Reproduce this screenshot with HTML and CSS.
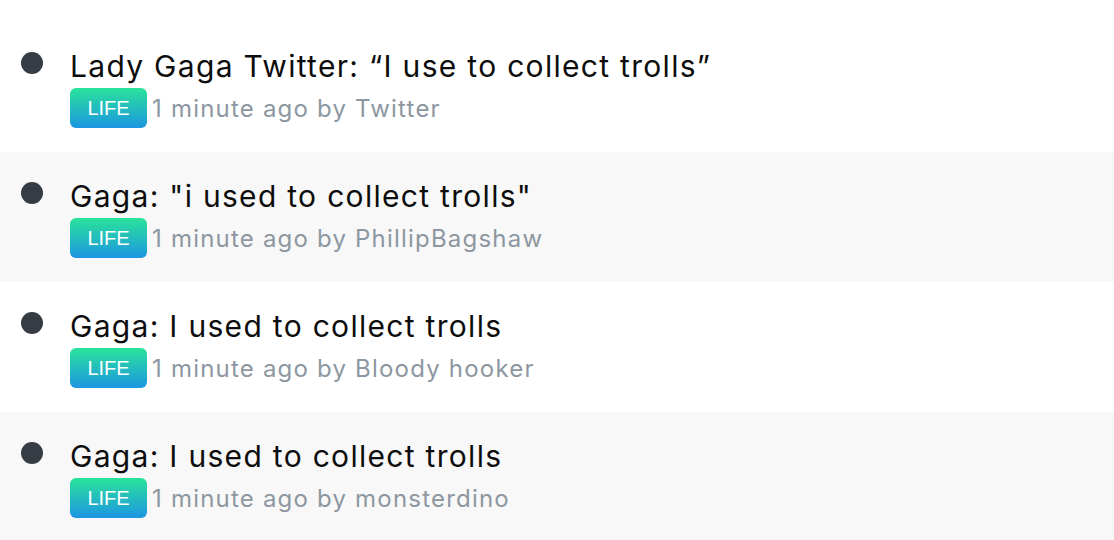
FILE: index.html
```html
<!DOCTYPE html>
<html lang="en">
<head>
  <meta charset="UTF-8" />
  <title>Stories</title>
  <link rel="stylesheet" href="styles.css">
</head>
<body>
  <ul class="stories">
    <li class="story">
      <span class="dot"></span>
      <div class="story-body">
        <h3>Lady Gaga Twitter: “I use to collect trolls”</h3>
        <div class="meta"><span class="tag">LIFE</span>1 minute ago by Twitter</div>
      </div>
    </li>
    <li class="story">
      <span class="dot"></span>
      <div class="story-body">
        <h3>Gaga: "i used to collect trolls"</h3>
        <div class="meta"><span class="tag">LIFE</span>1 minute ago by PhillipBagshaw</div>
      </div>
    </li>
    <li class="story">
      <span class="dot"></span>
      <div class="story-body">
        <h3>Gaga: I used to collect trolls</h3>
        <div class="meta"><span class="tag">LIFE</span>1 minute ago by Bloody hooker</div>
      </div>
    </li>
    <li class="story">
      <span class="dot"></span>
      <div class="story-body">
        <h3>Gaga: I used to collect trolls</h3>
        <div class="meta"><span class="tag">LIFE</span>1 minute ago by monsterdino</div>
      </div>
    </li>
  </ul>
</body>
</html>
```
FILE: styles.css
```css
* { margin: 0; padding: 0; box-sizing: border-box; }

body {
  font-family: Inter, "Liberation Sans", Arial, sans-serif;
  background: #fff;
  padding-top: 22px;
}

.stories {
  list-style: none;
}

.story {
  display: flex;
  align-items: flex-start;
  height: 130px;
  padding: 30px 20px 0 21px;
}

.story:nth-child(even) {
  background: #f8f8f8;
}

.dot {
  width: 22px;
  height: 22px;
  border-radius: 50%;
  background: #353c44;
  flex-shrink: 0;
}

.story-body {
  margin-left: 27px;
}

.story h3 {
  font-size: 30px;
  font-weight: normal;
  letter-spacing: 1.3px;
  color: #0d0d0d;
  line-height: 28px;
}

.meta {
  display: flex;
  align-items: center;
  margin-top: 8px;
  font-size: 24px;
  letter-spacing: 1.2px;
  color: #8d97a1;
}

.tag {
  display: inline-flex;
  align-items: center;
  justify-content: center;
  width: 77px;
  height: 40px;
  margin-right: 5px;
  border-radius: 6px;
  background: linear-gradient(to bottom, #2ae39a, #1c96e2);
  color: #fff;
  font-family: "Liberation Sans", Arial, sans-serif;
  font-size: 20px;
  letter-spacing: 0;
}
```
